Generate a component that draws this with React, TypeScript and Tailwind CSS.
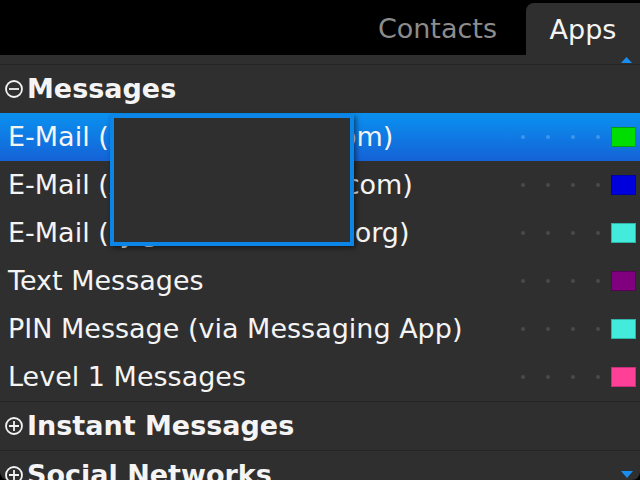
import React from "react";

type Row = { label: string; color: string; border: string };

const rows: Row[] = [
  { label: "E-Mail (xxxxxxxxxxxxx.com)", color: "bg-[#00dd00]", border: "border-[#0b9b0b]" },
  { label: "E-Mail (xxxxxxxxxxxxxw.com)", color: "bg-[#0000dd]", border: "border-[#0000a8]" },
  { label: "E-Mail (ry@xxxxxxxxxxxi.org)", color: "bg-[#42ebdc]", border: "border-[#2fb3a8]" },
  { label: "Text Messages", color: "bg-[#800080]", border: "border-[#5a005a]" },
  { label: "PIN Message (via Messaging App)", color: "bg-[#42ebdc]", border: "border-[#2fb3a8]" },
  { label: "Level 1 Messages", color: "bg-[#ff4098]", border: "border-[#c4307a]" },
];

function CircleIcon({ plus }: { plus?: boolean }) {
  return (
    <svg width="20" height="20" viewBox="0 0 20 20" className="shrink-0">
      <circle cx="10" cy="10" r="8" fill="none" stroke="#f2f2f2" strokeWidth="1.8" />
      <line x1="5" y1="10" x2="15" y2="10" stroke="#f2f2f2" strokeWidth="1.8" />
      {plus && <line x1="10" y1="5" x2="10" y2="15" stroke="#f2f2f2" strokeWidth="1.8" />}
    </svg>
  );
}

function Dots({ selected }: { selected?: boolean }) {
  return (
    <div className="flex gap-[21px]">
      {[0, 1, 2, 3].map((i) => (
        <span
          key={i}
          className={`w-[4px] h-[4px] rounded-full ${selected ? "bg-[#3d95ee]" : "bg-[#4a4a4a]"}`}
        />
      ))}
    </div>
  );
}

function SectionHeader({ title, plus }: { title: string; plus?: boolean }) {
  return (
    <div className="h-[48px] flex items-center pl-[4px] gap-[3px]">
      <CircleIcon plus={plus} />
      <span className="text-[27px] font-bold text-[#f4f4f4] whitespace-nowrap">{title}</span>
    </div>
  );
}

export default function App() {
  return (
    <div
      className="w-[640px] h-[480px] bg-black overflow-hidden"
      style={{ fontFamily: '"DejaVu Sans", "Liberation Sans", sans-serif' }}
    >
      <div className="relative w-full h-full rounded-b-[8px] overflow-hidden bg-[#2f2f2f]">
        {/* Tabs */}
        <div className="h-[55px] bg-black flex items-end justify-end">
          <div className="h-full flex items-center mr-[29px] text-[27px] text-[#8c8c8c] pt-[4px] whitespace-nowrap">
            Contacts
          </div>
          <div className="w-[114px] h-[52px] bg-[#2f2f2f] rounded-tl-[8px] flex items-center justify-center text-[27px] text-[#f4f4f4] pt-[2px]">
            Apps
          </div>
        </div>

        {/* scroll up marker */}
        <div className="h-[9px] flex justify-end items-center pr-[8px]">
          <svg width="11" height="6" viewBox="0 0 11 6">
            <polygon points="5.5,0 11,6 0,6" fill="#1a8ef0" />
          </svg>
        </div>
        <div className="h-[1px] bg-[#252525]" />

        <SectionHeader title="Messages" />

        {rows.map((r, i) => {
          const selected = i === 0;
          return (
            <div
              key={i}
              className={`h-[48px] flex items-center pl-[8px] pr-[4px] ${
                selected ? "bg-gradient-to-b from-[#0a91f0] to-[#1562d6]" : ""
              }`}
            >
              <span className="flex-1 text-[27px] text-[#f4f4f4] whitespace-nowrap">
                {r.label}
              </span>
              <Dots selected={selected} />
              <span className={`ml-[11px] w-[25px] h-[20px] border ${r.color} ${r.border}`} />
            </div>
          );
        })}

        <div className="h-[1px] bg-[#252525]" />
        <SectionHeader title="Instant Messages" plus />
        <div className="h-[1px] bg-[#252525]" />
        <SectionHeader title="Social Networks" plus />

        {/* scroll down marker */}
        <svg width="12" height="7" viewBox="0 0 12 7" className="absolute right-[7px] top-[471px]">
          <polygon points="0,0 12,0 6,7" fill="#1a8ef0" />
        </svg>

        {/* redaction box over addresses */}
        <div className="absolute left-[110px] top-[114px] w-[244px] h-[132px] border-[4px] border-[#0c85e8] bg-[#2f2f2f] shadow-[2px_2px_5px_rgba(0,0,0,0.5)]" />
      </div>
    </div>
  );
}
